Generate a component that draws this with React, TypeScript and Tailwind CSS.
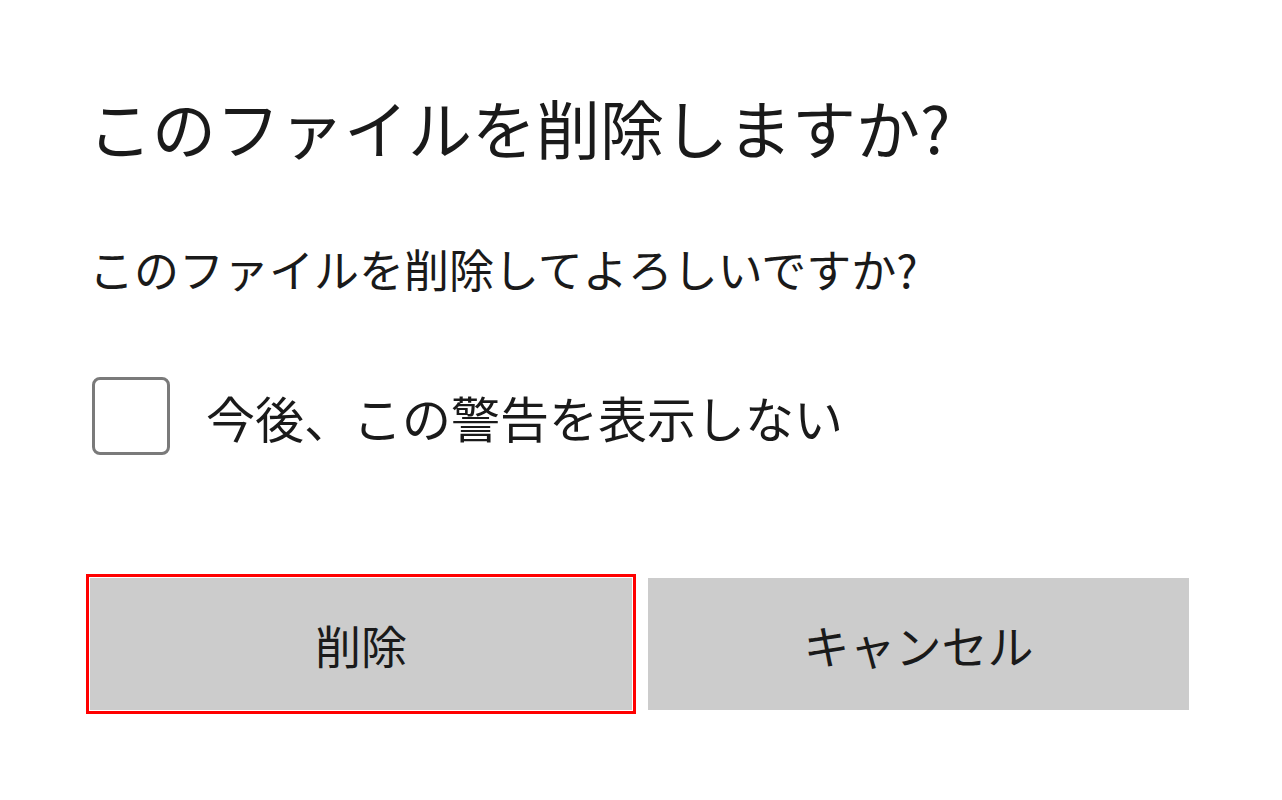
import React from 'react';

const font = { fontFamily: '"Noto Sans CJK JP", "Noto Sans", sans-serif' };

export default function App() {
  return (
    <div className="w-[1282px] h-[800px] bg-white text-[#1a1a1a] overflow-hidden" style={font}>
      <div className="flex flex-col pl-[90px] pt-[94px]">
        {/* Title */}
        <h1 className="-ml-[2px] text-[64px] leading-none font-normal">
          このファイルを削除しますか?
        </h1>

        {/* Message */}
        <p className="-ml-[1px] mt-[88px] text-[45px] leading-none">
          このファイルを削除してよろしいですか?
        </p>

        {/* Checkbox */}
        <label className="mt-[86px] flex items-center gap-[36px] pl-[2px]">
          <span className="w-[78px] h-[78px] rounded-[8px] border-[3px] border-[#7a7a7a] bg-white shrink-0" />
          <span className="text-[49px] leading-none">今後、この警告を表示しない</span>
        </label>

        {/* Buttons */}
        <div className="mt-[123px] flex gap-[16px]">
          <button className="w-[542px] h-[132px] bg-[#cccccc] text-[46px] leading-none outline-[3px] outline-solid outline-[#ff0000] outline-offset-[1px]">
            削除
          </button>
          <button className="w-[541px] h-[132px] bg-[#cccccc] text-[46px] leading-none">
            キャンセル
          </button>
        </div>
      </div>
    </div>
  );
}
